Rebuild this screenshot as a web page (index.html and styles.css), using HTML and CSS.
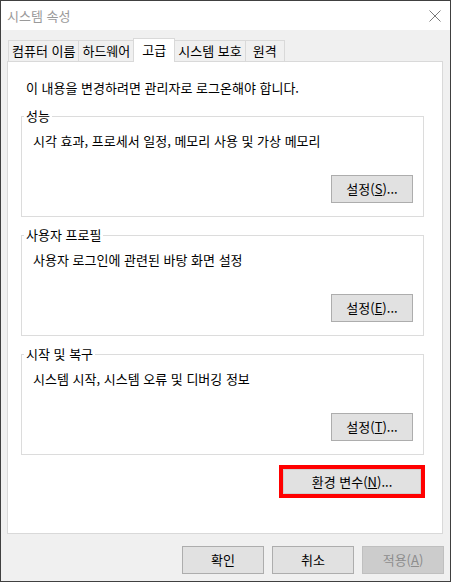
FILE: index.html
```html
<!DOCTYPE html>
<html lang="ko">
<head>
<meta charset="utf-8">
<title>시스템 속성</title>
<link rel="stylesheet" href="styles.css">
</head>
<body>
<div class="window">
  <div class="titlebar">
    <span class="title">시스템 속성</span>
    <svg class="close" width="12" height="12" viewBox="0 0 12 12" aria-hidden="true">
      <path d="M0.5 0.5 L11.5 11.5 M11.5 0.5 L0.5 11.5" stroke="#7a7a7a" stroke-width="1" fill="none"/>
    </svg>
  </div>
  <div class="client">
    <div class="tabs">
      <div class="tab">컴퓨터 이름</div>
      <div class="tab">하드웨어</div>
      <div class="tab active">고급</div>
      <div class="tab">시스템 보호</div>
      <div class="tab">원격</div>
    </div>
    <div class="panel">
      <p class="notice">이 내용을 변경하려면 관리자로 로그온해야 합니다.</p>
      <fieldset class="group">
        <legend>성능</legend>
        <p class="desc">시각 효과, 프로세서 일정, 메모리 사용 및 가상 메모리</p>
        <div class="actions"><button class="btn">설정(<u>S</u>)...</button></div>
      </fieldset>
      <fieldset class="group">
        <legend>사용자 프로필</legend>
        <p class="desc">사용자 로그인에 관련된 바탕 화면 설정</p>
        <div class="actions"><button class="btn">설정(<u>E</u>)...</button></div>
      </fieldset>
      <fieldset class="group">
        <legend>시작 및 복구</legend>
        <p class="desc">시스템 시작, 시스템 오류 및 디버깅 정보</p>
        <div class="actions"><button class="btn">설정(<u>T</u>)...</button></div>
      </fieldset>
      <div class="env-row">
        <div class="highlight"><button class="btn env">환경 변수(<u>N</u>)...</button></div>
      </div>
    </div>
    <div class="footer">
      <button class="btn dlg">확인</button>
      <button class="btn dlg">취소</button>
      <button class="btn dlg disabled" disabled>적용(<u>A</u>)</button>
    </div>
  </div>
</div>
</body>
</html>
```

FILE: styles.css
```css
* { box-sizing: border-box; }

html, body {
  margin: 0;
  padding: 0;
  background: #ffffff;
}

body {
  font-family: "Noto Sans CJK KR", "Noto Sans", sans-serif;
  font-size: 13px;
  line-height: 16px;
  color: #000;
}

.window {
  width: 451px;
  height: 582px;
  border: 1px solid #404040;
  display: flex;
  flex-direction: column;
  background: #f0f0f0;
}

.titlebar {
  height: 29px;
  background: #ffffff;
  display: flex;
  align-items: center;
  justify-content: space-between;
  padding: 0 9px 0 6px;
}

.title {
  color: #9a9a9a;
  font-size: 13px;
}

.close {
  display: block;
  margin-top: 1px;
}

.client {
  flex: 1;
  display: flex;
  flex-direction: column;
  padding: 8px 6px 0 6px;
}

.tabs {
  display: flex;
  align-items: flex-end;
  height: 23px;
  padding-left: 1px;
}

.tab {
  height: 21px;
  line-height: 20px;
  padding: 0 3px;
  min-width: 40px;
  text-align: center;
  white-space: nowrap;
  border: 1px solid #d9d9d9;
  border-bottom: none;
  background: #f0f0f0;
  margin-left: -1px;
}

.tab:first-child {
  margin-left: 0;
}

.tab.active {
  height: 24px;
  line-height: 22px;
  min-width: 42px;
  margin-bottom: -1px;
  background: #ffffff;
  position: relative;
  z-index: 1;
}

.panel {
  width: 436px;
  height: 473px;
  background: #ffffff;
  border: 1px solid #d9d9d9;
  padding: 18px 18px 0 13px;
}

.notice {
  margin: 0 0 12px 5px;
}

.group {
  margin: 0 0 10px 0;
  border: 1px solid #dcdcdc;
  padding: 9px 10px 13px 11px;
  min-width: 0;
}

.group legend {
  padding: 0 2px;
  margin-left: -9px;
  line-height: 16px;
}

.desc {
  margin: 0;
}

.actions {
  display: flex;
  justify-content: flex-end;
  margin-top: 26px;
}

.btn {
  font-family: inherit;
  font-size: 13px;
  line-height: 16px;
  color: #000;
  background: #e1e1e1;
  border: 1px solid #adadad;
  padding: 0;
  width: 82px;
  height: 28px;
  text-align: center;
  white-space: nowrap;
}

.env-row {
  display: flex;
  justify-content: flex-end;
  margin-top: 2px;
  margin-right: -1px;
}

.highlight {
  border: 4px solid #ff0000;
}

.btn.env {
  display: block;
  width: 138px;
  height: 25px;
  border-color: #cfcfcf;
}

.footer {
  display: flex;
  justify-content: flex-end;
  gap: 8px;
  margin-top: 12px;
  padding-right: 0;
}

.btn.dlg {
  width: 82px;
  height: 28px;
}

.btn.disabled {
  background: #cccccc;
  border-color: #bfbfbf;
  color: #8d8d8d;
}
```
